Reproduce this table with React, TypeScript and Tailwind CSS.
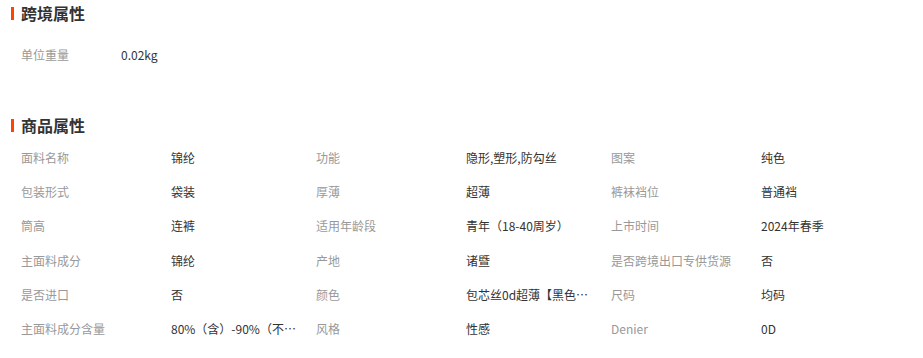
import React from "react";

const font = { fontFamily: '"Microsoft YaHei", "Noto Sans CJK SC", "Noto Sans", sans-serif' };

const rows: [string, string][][] = [
  [["面料名称", "锦纶"], ["功能", "隐形,塑形,防勾丝"], ["图案", "纯色"]],
  [["包装形式", "袋装"], ["厚薄", "超薄"], ["裤袜裆位", "普通裆"]],
  [["筒高", "连裤"], ["适用年龄段", "青年（18-40周岁）"], ["上市时间", "2024年春季"]],
  [["主面料成分", "锦纶"], ["产地", "诸暨"], ["是否跨境出口专供货源", "否"]],
  [["是否进口", "否"], ["颜色", "包芯丝0d超薄【黑色】连裤袜"], ["尺码", "均码"]],
  [["主面料成分含量", "80%（含）-90%（不含）"], ["风格", "性感"], ["Denier", "0D"]],
];

function Header({ title }: { title: string }) {
  return (
    <div className="flex items-center h-[26px] pl-[11px]">
      <div className="w-[3px] h-[13px] bg-[#ff4400]" />
      <div className="ml-[7px] text-[16px] font-bold text-[#333] leading-none">{title}</div>
    </div>
  );
}

function Cell({ label, value }: { label: string; value: string }) {
  return (
    <div className="flex items-center w-[295px] h-[34.2px] text-[12px]">
      <div className="w-[150px] text-[#999] whitespace-nowrap">{label}</div>
      <div className="w-[125px] text-[#333] whitespace-nowrap overflow-hidden text-ellipsis">{value}</div>
    </div>
  );
}

export default function App() {
  return (
    <div className="w-[923px] h-[358px] bg-white overflow-hidden" style={font}>
      <Header title="跨境属性" />
      <div className="pl-[21px] mt-[12px]">
        <div className="flex items-center h-[34px] text-[12px]">
          <div className="w-[100px] text-[#999]">单位重量</div>
          <div className="text-[#333]">0.02kg</div>
        </div>
      </div>
      <div className="mt-[40px]">
        <Header title="商品属性" />
      </div>
      <div className="pl-[21px] mt-[3px] flex flex-col">
        {rows.map((r, i) => (
          <div key={i} className="flex">
            {r.map(([l, v], j) => (
              <Cell key={j} label={l} value={v} />
            ))}
          </div>
        ))}
      </div>
    </div>
  );
}
